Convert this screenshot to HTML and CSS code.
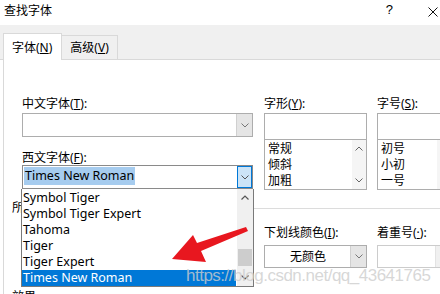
FILE: index.html
```html
<!DOCTYPE html>
<html>
	<head>
		<meta charset="utf-8">
		<title>查找字体</title>
		<link rel="stylesheet" href="styles.css">
	</head>
	<body>
		<div class="titlebar">
			<span class="title">查找字体</span>
			<span class="help">?</span>
			<svg class="close" width="10" height="10" viewBox="0 0 10 10"><path d="M0.5 0.5 L9.5 9.5 M9.5 0.5 L0.5 9.5" stroke="#111" stroke-width="1" fill="none"/></svg>
		</div>

		<div class="tabstrip">
			<div class="tab tab_on">字体(<u>N</u>)</div>
			<div class="tab">高级(<u>V</u>)</div>
		</div>

		<div class="panel">
			<div class="cols">
				<div class="col col_west">
					<div class="lbl">中文字体(<u>T</u>):</div>
					<div class="combo combo_first">
						<div class="combo_text"></div>
						<div class="combo_btn"><svg width="8" height="5" viewBox="0 0 8 5"><polyline points="0.5,0.5 4,4 7.5,0.5" fill="none" stroke="#777"/></svg></div>
					</div>
					<div class="lbl lbl_gap">西文字体(<u>F</u>):</div>
					<div class="combo combo_open">
						<div class="combo_text"><span class="sel">Times New Roman</span></div>
						<div class="combo_btn btn_on"><svg width="8" height="5" viewBox="0 0 8 5"><polyline points="0.5,0.5 4,4 7.5,0.5" fill="none" stroke="#555"/></svg></div>
					</div>

					<div class="droplist">
						<div class="drop_items">
							<div class="item">Symbol Tiger</div>
							<div class="item">Symbol Tiger Expert</div>
							<div class="item">Tahoma</div>
							<div class="item">Tiger</div>
							<div class="item">Tiger Expert</div>
							<div class="item item_on">Times New Roman</div>
						</div>
						<div class="vscroll">
							<div class="sb_btn"><svg width="8" height="5" viewBox="0 0 8 5"><polyline points="0.5,4.5 4,1 7.5,4.5" fill="none" stroke="#555" stroke-width="1.2"/></svg></div>
							<div class="sb_track"><div class="sb_thumb"></div></div>
							<div class="sb_btn"><svg width="8" height="5" viewBox="0 0 8 5"><polyline points="0.5,0.5 4,4 7.5,0.5" fill="none" stroke="#555" stroke-width="1.2"/></svg></div>
						</div>
					</div>
				</div>

				<div class="col col_style">
					<div class="lbl">字形(<u>Y</u>):</div>
					<div class="textbox"></div>
					<div class="listbox">
						<div class="list_items">
							<div class="litem">常规</div>
							<div class="litem">倾斜</div>
							<div class="litem">加粗</div>
						</div>
						<div class="list_scroll">
							<svg width="8" height="5" viewBox="0 0 8 5"><polyline points="0.5,4.5 4,1 7.5,4.5" fill="none" stroke="#666"/></svg>
							<svg width="8" height="5" viewBox="0 0 8 5"><polyline points="0.5,0.5 4,4 7.5,0.5" fill="none" stroke="#666"/></svg>
						</div>
					</div>
				</div>

				<div class="col col_size">
					<div class="lbl">字号(<u>S</u>):</div>
					<div class="textbox"></div>
					<div class="listbox">
						<div class="list_items">
							<div class="litem">初号</div>
							<div class="litem">小初</div>
							<div class="litem">一号</div>
						</div>
						<div class="list_scroll">
							<svg width="8" height="5" viewBox="0 0 8 5"><polyline points="0.5,4.5 4,1 7.5,4.5" fill="none" stroke="#666"/></svg>
							<svg width="8" height="5" viewBox="0 0 8 5"><polyline points="0.5,0.5 4,4 7.5,0.5" fill="none" stroke="#666"/></svg>
						</div>
					</div>
				</div>
			</div>

			<div class="group"><span>所有文字</span><div class="group_line"></div></div>

			<div class="cols cols2">
				<div class="col col_west"></div>
				<div class="col col_style">
					<div class="lbl">下划线颜色(<u>I</u>):</div>
					<div class="combo">
						<div class="combo_text combo_center">无颜色</div>
						<div class="combo_btn"><svg width="8" height="5" viewBox="0 0 8 5"><polyline points="0.5,0.5 4,4 7.5,0.5" fill="none" stroke="#777"/></svg></div>
					</div>
				</div>
				<div class="col col_size">
					<div class="lbl">着重号(<u>·</u>):</div>
					<div class="combo combo_off">
						<div class="combo_text"></div>
						<div class="combo_btn"><svg width="8" height="5" viewBox="0 0 8 5"><polyline points="0.5,0.5 4,4 7.5,0.5" fill="none" stroke="#999"/></svg></div>
					</div>
				</div>
			</div>

			<div class="group group_fx"><span>效果</span><div class="group_line"></div></div>
		</div>

		<div class="watermark">https://blog.csdn.net/qq_43641765</div>

		<svg class="arrow" width="440" height="294" viewBox="0 0 440 294">
			<polygon points="172,259 193,235 197,243 246,227 248,231 201,251 206,262" fill="#e8171f"/>
		</svg>
	</body>
</html>
```

FILE: styles.css
```css
body {
	margin: 0;
	width: 440px;
	height: 294px;
	overflow: hidden;
	position: relative;
	background: #fff;
	color: #000;
	font-family: "Noto Sans", "Noto Sans CJK SC", sans-serif;
	font-size: 12px;
}

/* title bar */
.titlebar {
	height: 25px;
	box-sizing: border-box;
	display: flex;
	align-items: flex-start;
	padding: 2px 2px 0 4px;
	line-height: 16px;
}
.title {
	flex: 1;
	font-family: "Noto Sans CJK SC", sans-serif;
	font-size: 12px;
}
.help {
	font-family: "Liberation Sans", sans-serif;
	font-size: 13px;
	margin-right: 35px;
}
.close {
	margin-top: 5px;
}

/* tabs */
.tabstrip {
	height: 34px;
	background: #f0f0f0;
	border-bottom: 1px solid #d9d9d9;
	display: flex;
	align-items: flex-end;
	padding-left: 3px;
}
.tab {
	height: 24px;
	box-sizing: border-box;
	border-top: 1px solid #d9d9d9;
	border-right: 1px solid #d9d9d9;
	padding: 4px 8px 0 8px;
	line-height: 16px;
	white-space: nowrap;
}
.tab_on {
	height: 27px;
	margin-bottom: -1px;
	background: #fff;
	border-left: 1px solid #d9d9d9;
	padding: 6px 9px 0 8px;
}

/* panel */
.panel {
	margin-left: 3px;
	border-left: 1px solid #d9d9d9;
	padding: 36px 0 0 8px;
}
.cols {
	display: flex;
	padding-left: 10px;
}
.col {
	flex: none;
	position: relative;
}
.col_west {
	width: 231px;
}
.col_style {
	width: 103px;
	margin-left: 11px;
}
.col_size {
	width: 75px;
	margin-left: 10px;
}
.lbl {
	height: 16px;
	line-height: 16px;
	white-space: nowrap;
}
.lbl_gap {
	margin-top: 13px;
}

.combo {
	height: 24px;
	box-sizing: border-box;
	border: 1px solid #adadad;
	display: flex;
	background: #fff;
}
.combo_first {
	margin-top: 1px;
}
.combo_open {
	margin-top: -1px;
	border-color: #8a8a8a;
}
.combo_text {
	flex: 1;
	line-height: 22px;
	padding-left: 1px;
	white-space: nowrap;
	font-size: 12px;
}
.combo_center {
	text-align: center;
}
.combo_btn {
	width: 15px;
	background: #e5e5e5;
	border-left: 1px solid #d0d0d0;
	display: flex;
	align-items: center;
	justify-content: center;
}
.btn_on {
	background: #cce4f7;
	border: 1px solid #0078d7;
	width: 13px;
}
.sel {
	display: inline-block;
	font-size: 12.5px;
	line-height: 18px;
	margin-top: 1px;
	padding: 0 1px;
	background: #a6ccef;
	vertical-align: top;
}
.combo_off {
	border-color: #cccccc;
}
.combo_off .combo_btn {
	background: #f0f0f0;
	border-left-color: #e3e3e3;
}

/* font dropdown */
.droplist {
	position: absolute;
	left: -1px;
	top: 93px;
	z-index: 5;
	width: 231px;
	height: 97px;
	border: 1px solid #7a7a7a;
	border-top: none;
	background: #fff;
	display: flex;
	font-size: 12.5px;
}
.drop_items {
	width: 214px;
	padding-top: 1px;
}
.item {
	height: 16px;
	line-height: 16px;
	padding-left: 1px;
	white-space: nowrap;
}
.item_on {
	background: #0078d7;
	color: #fff;
}
.vscroll {
	width: 16px;
	margin-left: 1px;
	background: #f0f0f0;
	display: flex;
	flex-direction: column;
}
.sb_btn {
	height: 17px;
	display: flex;
	align-items: center;
	justify-content: center;
}
.sb_track {
	flex: 1;
}
.sb_thumb {
	margin: 43px 1px 0 1px;
	height: 17px;
	background: #cdcdcd;
}

/* style and size boxes */
.textbox {
	margin-top: 1px;
	height: 27px;
	box-sizing: border-box;
	border: 1px solid #adadad;
}
.listbox {
	height: 50px;
	box-sizing: border-box;
	border: 1px solid #adadad;
	border-top: none;
	display: flex;
}
.list_items {
	flex: 1;
	padding: 1px 0 0 3px;
}
.litem {
	height: 16px;
	line-height: 16px;
}
.list_scroll {
	width: 14px;
	background: #f5f5f5;
	display: flex;
	flex-direction: column;
	align-items: center;
	justify-content: space-between;
	padding: 6px 0;
}

/* groups */
.group {
	display: flex;
	align-items: center;
	margin-top: 10px;
	height: 16px;
	line-height: 16px;
}
.group_line {
	flex: 1;
	border-top: 1px solid #dcdcdc;
	margin-left: 4px;
}
.cols2 {
	margin-top: 9px;
}
.cols2 .combo {
	margin-top: 4px;
	height: 23px;
}
.group_fx {
	margin-top: 21px;
}

/* overlays */
.watermark {
	position: absolute;
	left: 186px;
	top: 266px;
	z-index: 8;
	font-family: "Liberation Sans", sans-serif;
	font-size: 17px;
	line-height: 20px;
	letter-spacing: -0.5px;
	color: rgba(205, 205, 205, 0.8);
	white-space: nowrap;
}
.arrow {
	position: absolute;
	left: 0;
	top: 0;
	z-index: 9;
	pointer-events: none;
}
```
